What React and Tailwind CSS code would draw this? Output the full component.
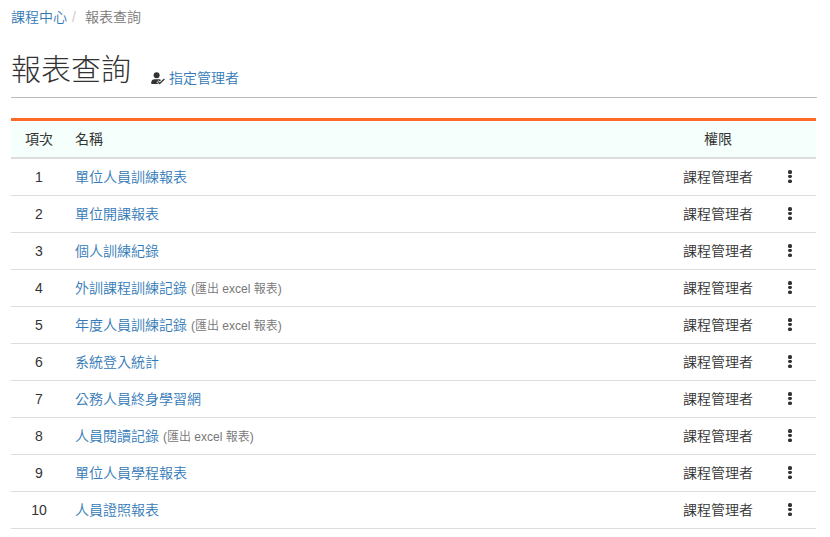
// src/pages/ReportList.jsx
const reports = [
  { id: 1, name: "單位人員訓練報表", role: "課程管理者" },
  { id: 2, name: "單位開課報表", role: "課程管理者" },
  { id: 3, name: "個人訓練紀錄", role: "課程管理者" },
  { id: 4, name: "外訓課程訓練記錄", note: "(匯出 excel 報表)", role: "課程管理者" },
  { id: 5, name: "年度人員訓練記錄", note: "(匯出 excel 報表)", role: "課程管理者" },
  { id: 6, name: "系統登入統計", role: "課程管理者" },
  { id: 7, name: "公務人員終身學習網", role: "課程管理者" },
  { id: 8, name: "人員閱讀記錄", note: "(匯出 excel 報表)", role: "課程管理者" },
  { id: 9, name: "單位人員學程報表", role: "課程管理者" },
  { id: 10, name: "人員證照報表", role: "課程管理者" },
];

function ManagerIcon() {
  return (
    <svg width="14" height="13" viewBox="0 0 14 13" aria-hidden="true">
      <circle cx="5.6" cy="3.3" r="3" fill="#333" />
      <path
        d="M0.3 12V10.2C0.3 8.2 1.8 7.2 3.6 7.2H7.6C8.8 7.2 9.8 7.6 10.4 8.4L9.6 12Z"
        fill="#333"
      />
      <path
        d="M6.4 9.2L8.6 11.2L13.4 6.6"
        fill="none"
        stroke="#fff"
        strokeWidth="2.6"
      />
      <path
        d="M6.6 9.4L8.6 11.5L13.4 7"
        fill="none"
        stroke="#333"
        strokeWidth="1.3"
      />
    </svg>
  );
}

function DotsIcon() {
  return (
    <svg
      width="4"
      height="14"
      viewBox="0 0 4 14"
      fill="#333"
      className="mx-auto"
      aria-hidden="true"
    >
      <rect x="0" y="0" width="4" height="4" rx="1.6" />
      <rect x="0" y="5" width="4" height="3" rx="1.4" />
      <rect x="0" y="9.5" width="4" height="3.5" rx="1.6" />
    </svg>
  );
}

export default function App() {
  return (
    <div className="bg-white pl-[11px] pr-[13px] pt-[7px] pb-2 font-['Liberation_Sans','Noto_Sans_CJK_TC',sans-serif] text-sm leading-5 font-[350] text-[#333]">
      <nav aria-label="breadcrumb">
        <ol className="flex">
          <li>
            <a href="#" className="text-[#337ab7] hover:underline">
              課程中心
            </a>
            <span className="px-[5px] text-[#ccc]">/</span>
          </li>
          <li className="pl-1 text-[#777]">報表查詢</li>
        </ol>
      </nav>

      <header className="flex items-end gap-5 border-b border-[#bbb] pt-6 pb-2">
        <h1 className="text-3xl leading-[38px] font-light">報表查詢</h1>
        <a
          href="#"
          className="flex items-center gap-1 pb-px text-[#337ab7] hover:underline"
        >
          <ManagerIcon />
          指定管理者
        </a>
      </header>

      <div className="mt-5 pr-px">
        <table className="w-full table-fixed border-collapse">
          <colgroup>
            <col className="w-14" />
            <col />
            <col className="w-[92px]" />
            <col className="w-[52px]" />
          </colgroup>
          <thead>
            <tr className="border-t-3 border-b-2 border-t-[#ff6b26] border-b-[#ddd] bg-[#f5fffb]">
              <th className="p-2 font-normal">項次</th>
              <th className="p-2 text-left font-normal">名稱</th>
              <th className="p-2 font-normal">權限</th>
              <th className="p-2" aria-label="操作"></th>
            </tr>
          </thead>
          <tbody>
            {reports.map((report) => (
              <tr key={report.id} className="border-b border-[#ddd]">
                <td className="p-2 text-center">{report.id}</td>
                <td className="p-2">
                  <a href="#" className="text-[#337ab7] hover:underline">
                    {report.name}
                  </a>
                  {report.note && (
                    <span className="ml-1 text-xs text-[#777]">
                      {report.note}
                    </span>
                  )}
                </td>
                <td className="p-2 text-center">{report.role}</td>
                <td className="p-2">
                  <button
                    type="button"
                    aria-label={`${report.name} 選單`}
                    className="block w-full cursor-pointer"
                  >
                    <DotsIcon />
                  </button>
                </td>
              </tr>
            ))}
          </tbody>
        </table>
      </div>
    </div>
  );
}
